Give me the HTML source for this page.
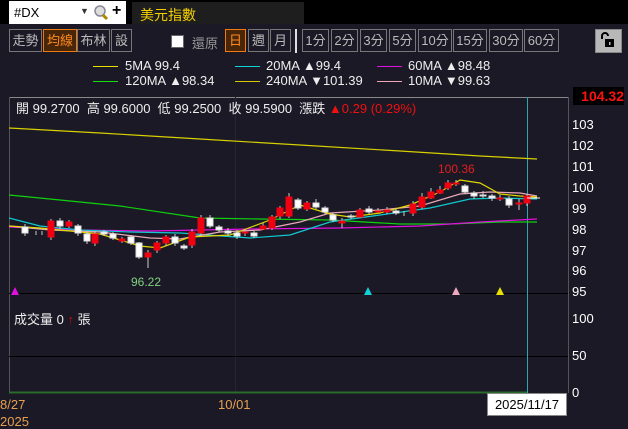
<!DOCTYPE html>
<html><head><meta charset="utf-8"><style>
body{margin:0;width:628px;height:426px;background:#1a1925;overflow:hidden;position:relative;font-family:"Liberation Sans","Noto Sans CJK TC",sans-serif;}
.a{position:absolute;}
.btn{position:absolute;top:29px;height:21px;border:1px solid #777;color:#bbb;font-size:13px;line-height:21px;text-align:center;box-sizing:content-box;}
.on{border-color:#f07a10;background:#4a2608;color:#ff8a20;}
.lg{position:absolute;font-size:13px;color:#eee;}
.ax{position:absolute;left:572px;font-size:13px;color:#fff;}
</style></head><body>
<div class="a" style="left:0;top:0;width:628px;height:24px;background:#000"></div>
<div class="a" style="left:9px;top:1px;width:117px;height:23px;background:#fff;"></div>
<div class="a" style="left:14px;top:5px;font-size:13px;color:#000">#DX</div>
<div class="a" style="left:80px;top:6px;font-size:9px;color:#333">▼</div>
<svg class="a" style="left:93px;top:4px" width="16" height="17"><circle cx="7" cy="7" r="5" fill="#ddd" stroke="#889" stroke-width="1.5"/><line x1="10" y1="11" x2="14" y2="15" stroke="#a80" stroke-width="3"/></svg>
<div class="a" style="left:112px;top:2px;font-size:16px;font-weight:bold;color:#000">+</div>
<div class="a" style="left:132px;top:2px;width:172px;height:22px;background:#1e1e1e;"></div>
<div class="a" style="left:140px;top:5px;font-size:14px;color:#f5d000">美元指數</div>

<div class="btn" style="left:9px;width:31px">走勢</div>
<div class="btn on" style="left:43px;width:32px">均線</div>
<div class="btn" style="left:77px;width:31px">布林</div>
<div class="btn" style="left:111px;width:19px">設</div>
<div class="a" style="left:171px;top:35px;width:11px;height:11px;background:#fff;border:1px solid #666"></div>
<div class="a" style="left:192px;top:33px;font-size:13px;color:#999">還原</div>
<div class="btn on" style="left:225px;width:19px">日</div>
<div class="btn" style="left:248px;width:19px">週</div>
<div class="btn" style="left:270px;width:19px">月</div>
<div class="a" style="left:295px;top:29px;width:2px;height:24px;background:#ddd"></div>
<div class="btn" style="left:302px;width:25px">1分</div>
<div class="btn" style="left:331px;width:25px">2分</div>
<div class="btn" style="left:360px;width:25px">3分</div>
<div class="btn" style="left:389px;width:25px">5分</div>
<div class="btn" style="left:418px;width:32px">10分</div>
<div class="btn" style="left:453px;width:32px">15分</div>
<div class="btn" style="left:489px;width:32px">30分</div>
<div class="btn" style="left:524px;width:33px">60分</div>
<div class="a" style="left:595px;top:29px;width:25px;height:22px;background:#b8b8b8;border:1px solid #888"></div>
<svg class="a" style="left:599px;top:31px" width="18" height="18"><path d="M3 8V5a3 3 0 0 1 6 0" fill="none" stroke="#000" stroke-width="2"/><rect x="6" y="8" width="9" height="8" fill="#000"/><rect x="10" y="11" width="1.5" height="3" fill="#bbb"/></svg>

<div class="a" style="left:93px;top:66px;width:25px;height:1px;background:#e8e000"></div><div class="lg" style="left:125px;top:58px">5MA 99.4</div>
<div class="a" style="left:235px;top:66px;width:25px;height:1px;background:#10d0d8"></div><div class="lg" style="left:266px;top:58px">20MA ▲99.4</div>
<div class="a" style="left:377px;top:66px;width:25px;height:1px;background:#e010e0"></div><div class="lg" style="left:408px;top:58px">60MA ▲98.48</div>
<div class="a" style="left:93px;top:81px;width:25px;height:1px;background:#10e010"></div><div class="lg" style="left:125px;top:73px">120MA ▲98.34</div>
<div class="a" style="left:235px;top:81px;width:25px;height:1px;background:#d8c800"></div><div class="lg" style="left:266px;top:73px">240MA ▼101.39</div>
<div class="a" style="left:377px;top:81px;width:25px;height:1px;background:#f0a8b8"></div><div class="lg" style="left:408px;top:73px">10MA ▼99.63</div>

<svg class="a" style="left:0;top:0" width="628" height="426">
<line x1="9" y1="97.5" x2="568" y2="97.5" stroke="#888" stroke-width="1"/>
<line x1="9.5" y1="97" x2="9.5" y2="393" stroke="#555"/>
<line x1="568.5" y1="97" x2="568.5" y2="393" stroke="#555"/>
<line x1="235.5" y1="97" x2="235.5" y2="393" stroke="#262533"/>
<line x1="9" y1="293.5" x2="568" y2="293.5" stroke="#000"/>
<line x1="9" y1="356.5" x2="568" y2="356.5" stroke="#000"/>
<line x1="9" y1="392.5" x2="527" y2="392.5" stroke="#2a6a2a" stroke-width="2"/>
<line x1="527.5" y1="97" x2="527.5" y2="393" stroke="#2aa8b0"/>
<polyline fill="none" stroke="#d8d000" stroke-width="1.2" points="9,128 100,133 200,139 300,145 400,151 480,156 537,159"/>
<polyline fill="none" stroke="#10d010" stroke-width="1.2" points="9,195 60,200 120,206 200,218 260,219 330,220 400,224 450,224 500,222 537,222"/>
<polyline fill="none" stroke="#e010e0" stroke-width="1.2" points="9,227 80,230 150,231 250,229 340,228 420,226 480,222 537,219"/>
<polyline fill="none" stroke="#10c8d0" stroke-width="1.2" points="9,218 40,226 80,230 130,232 180,233 250,238 290,235 330,222 380,215 430,208 470,199 500,198 537,199"/>
<polyline fill="none" stroke="#e8a8b8" stroke-width="1.2" points="9,226 50,230 100,232 150,238 180,239 220,232 260,230 300,222 330,213 380,210 420,206 460,194 490,192 520,193 537,196"/>
<polyline fill="none" stroke="#e0d800" stroke-width="1.2" points="9,226 40,228 100,234 140,246 160,248 190,237 230,235 270,220 300,205 330,214 350,217 380,213 410,205 440,192 460,180 480,183 500,194 520,196 537,197"/>
<g stroke-width="1">
<path d="M25 224V236M36 231V235M42 231V235M51 219V240M60 218V229M69 220V228M78 224V236M87 231V244M95 231V246M104 230V236M113 232V240M122 237V243M131 235V245M139 242V259M148 250V268M157 241V253M166 235V246M175 234V246M184 244V250M192 229V248M201 215V236M210 215V228M219 225V232M228 228V236M237 230V239M245 229V236M254 231V238M263 223V230M272 215V230M280 206V219M289 193V218M298 198V210M307 201V211M316 199V209M325 206V214M333 213V222M342 218V228M351 214V219M360 208V218M369 206V214M378 208V212M387 207V214M396 208V215M404 211V216M413 201V216M422 193V209M431 188V199M440 186V194M448 180V190M456 180V186M465 184V194M474 191V199M483 191V198M492 194V201M500 195V201M509 196V208M519 199V210M527 194V206" stroke="#ccc"/>
</g>
<g fill="#fff" stroke="#ddd">
<rect x="22" y="227" width="6" height="6"/><rect x="57" y="221" width="6" height="5"/><rect x="75" y="226" width="6" height="7"/><rect x="84" y="234" width="6" height="7"/><rect x="101" y="232" width="6" height="2"/><rect x="110" y="234" width="6" height="4"/><rect x="128" y="237" width="6" height="6"/><rect x="136" y="243" width="6" height="14"/><rect x="172" y="237" width="6" height="6"/><rect x="181" y="246" width="6" height="2"/><rect x="207" y="218" width="6" height="8"/><rect x="216" y="227" width="6" height="3"/><rect x="225" y="231" width="6" height="2"/><rect x="234" y="233" width="6" height="3"/><rect x="251" y="233" width="6" height="3"/><rect x="295" y="200" width="6" height="8"/><rect x="313" y="203" width="6" height="4"/><rect x="322" y="208" width="6" height="4"/><rect x="330" y="215" width="6" height="5"/><rect x="348" y="216" width="6" height="1"/><rect x="366" y="209" width="6" height="3"/><rect x="393" y="211" width="6" height="2"/><rect x="462" y="186" width="6" height="6"/><rect x="471" y="193" width="6" height="3"/><rect x="480" y="195" width="6" height="1"/><rect x="489" y="196" width="6" height="2"/><rect x="506" y="199" width="6" height="6"/>
</g>
<g fill="#f00010" stroke="#f00010">
<rect x="48" y="221" width="6" height="16"/><rect x="66" y="222" width="6" height="4"/><rect x="92" y="234" width="6" height="9"/><rect x="119" y="239" width="6" height="2"/><rect x="145" y="253" width="6" height="4"/><rect x="154" y="243" width="6" height="7"/><rect x="163" y="237" width="6" height="6"/><rect x="189" y="232" width="6" height="13"/><rect x="198" y="218" width="6" height="15"/><rect x="242" y="232" width="6" height="1"/><rect x="260" y="226" width="6" height="3"/><rect x="269" y="217" width="6" height="11"/><rect x="277" y="208" width="6" height="8"/><rect x="286" y="197" width="6" height="19"/><rect x="304" y="203" width="6" height="6"/><rect x="339" y="221" width="6" height="2"/><rect x="357" y="210" width="6" height="7"/><rect x="375" y="211" width="6" height="1"/><rect x="384" y="210" width="6" height="2"/><rect x="410" y="204" width="6" height="9"/><rect x="419" y="197" width="6" height="10"/><rect x="428" y="192" width="6" height="6"/><rect x="437" y="190" width="6" height="3"/><rect x="445" y="183" width="6" height="5"/><rect x="453" y="183" width="6" height="1"/><rect x="497" y="198" width="6" height="1"/><rect x="516" y="203" width="6" height="1"/><rect x="524" y="196" width="6" height="7"/>
</g>
<line x1="527" y1="198" x2="540" y2="198" stroke="#fff"/>
<polygon points="11,295 15,287 19,295" fill="#e010e0"/>
<polygon points="364,295 368,287 372,295" fill="#10d0d8"/>
<polygon points="452,295 456,287 460,295" fill="#f0a8c0"/>
<polygon points="496,295 500,287 504,295" fill="#e8e000"/>
</svg>
<div class="a" style="left:16px;top:98px;font-size:13px;color:#eee;white-space:nowrap">開 99.2700&nbsp; 高 99.6000&nbsp; 低 99.2500&nbsp; 收 99.5900&nbsp; 漲跌 <span style="color:#f01010">▲0.29 (0.29%)</span></div>
<div class="a" style="left:573px;top:87px;width:51px;height:18px;background:#000;color:#ff1010;font-weight:bold;font-size:14px;line-height:18px;text-align:right">104.32</div>
<div class="a" style="left:438px;top:162px;font-size:12px;color:#e02020">100.36</div>
<div class="a" style="left:131px;top:275px;font-size:12px;color:#80d080">96.22</div>
<div class="ax" style="top:117px">103</div><div class="ax" style="top:138px">102</div><div class="ax" style="top:159px">101</div><div class="ax" style="top:180px">100</div><div class="ax" style="top:201px">99</div><div class="ax" style="top:222px">98</div><div class="ax" style="top:243px">97</div><div class="ax" style="top:263px">96</div><div class="ax" style="top:284px">95</div><div class="ax" style="top:311px">100</div><div class="ax" style="top:348px">50</div><div class="ax" style="top:385px">0</div>
<div class="a" style="left:14px;top:309px;font-size:13px;color:#eee">成交量 0 <span style="color:#c01010">↑</span> 張</div>
<div class="a" style="left:0;top:397px;font-size:13px;color:#e8a050">8/27</div>
<div class="a" style="left:218px;top:397px;font-size:13px;color:#e8a050">10/01</div>
<div class="a" style="left:0;top:414px;font-size:13px;color:#e8a050">2025</div>
<div class="a" style="left:487px;top:393px;width:78px;height:21px;background:#fff;border:1px solid #888;font-size:13px;line-height:21px;text-align:center;color:#000">2025/11/17</div>
</body></html>
